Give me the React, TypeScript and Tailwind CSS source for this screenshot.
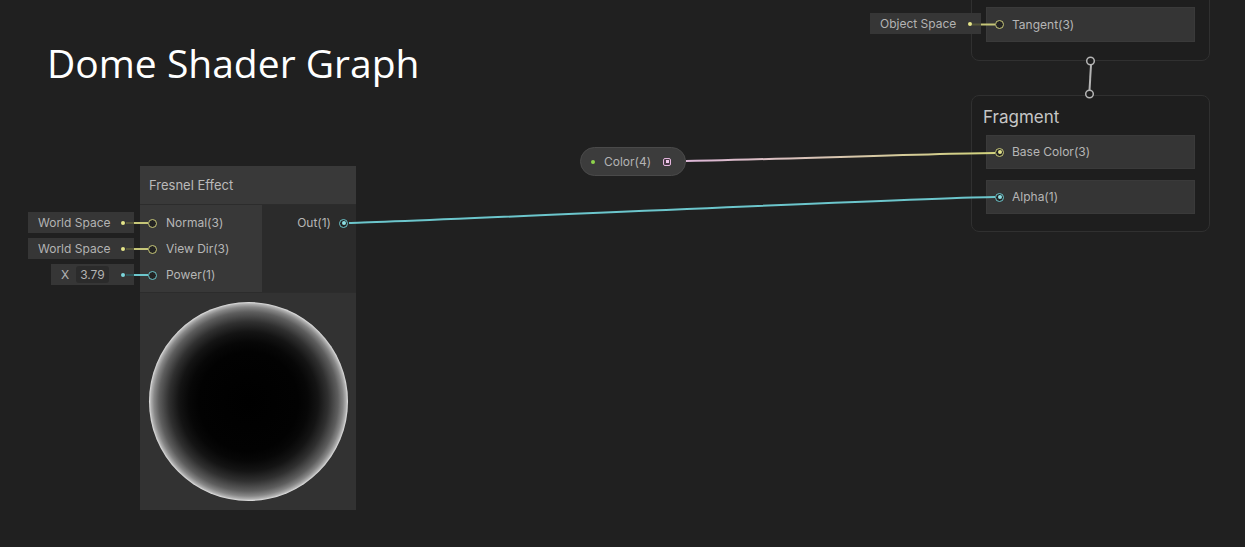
import type { ReactNode } from "react";

type PortColor = "yellow" | "cyan";

const ringColor: Record<PortColor, string> = {
    yellow: "border-[#c9c97a]",
    cyan: "border-[#6cc6cc]",
};

function Ring({ color, filled }: { color: PortColor; filled?: boolean }) {
    return (
        <span
            className={`flex h-[9px] w-[9px] shrink-0 items-center justify-center rounded-full border-[1.5px] bg-[#232323] ${ringColor[color]}`}
        >
            {filled && (
                <span
                    className={
                        color === "yellow"
                            ? "h-[4px] w-[4px] rounded-full bg-[#e2e28c]"
                            : "h-[4px] w-[4px] rounded-full bg-[#8de0e4]"
                    }
                />
            )}
        </span>
    );
}

function InputPill({ children, dot }: { children: ReactNode; dot: string }) {
    return (
        <div className="flex h-[21px] items-center justify-end gap-[7px] bg-[#363636] pl-[10px] pr-[9px] text-[12px] text-[#b3b3b3]">
            {children}
            <span className={`h-[4px] w-[4px] rounded-full ${dot}`} />
        </div>
    );
}

function MasterRow({ label, color, filled }: { label: string; color: PortColor; filled?: boolean }) {
    return (
        <div className="flex h-[34px] items-center gap-[8px] border border-[#3a3a3a] bg-[#353535] pl-[8px] text-[12px] text-[#b6b6b6]">
            <Ring color={color} filled={filled} />
            <span>{label}</span>
        </div>
    );
}

const sphere =
    "bg-[radial-gradient(circle_closest-side,#000_0%,#020202_50%,#070707_60%,#141414_70%,#303030_80%,#5e5e5e_90%,#878787_95%,#b0b0b0_98%,#e4e4e4_100%)]";

export default function App() {
    return (
        <div className="relative h-[547px] w-[1245px] overflow-hidden bg-[#202020] font-['Inter',sans-serif]">
            <h1 className="absolute left-[47px] top-[37px] font-['Open_Sans',sans-serif] text-[39px] leading-[52px] text-white">
                Dome Shader Graph
            </h1>

            {/* Vertex node (cut off at top) */}
            <div className="absolute left-[971px] top-[-40px] flex w-[239px] flex-col rounded-[8px] border border-[#303030] bg-[#1e1e1e] px-[14px] pb-[18px] pt-[46px]">
                <div className="flex h-[35px] items-center gap-[8px] border border-[#3a3a3a] bg-[#353535] pl-[8px] text-[12px] text-[#b6b6b6]">
                    <Ring color="yellow" />
                    <span>Tangent(3)</span>
                </div>
            </div>
            <div className="absolute left-[870px] top-[13px]">
                <div className="w-[111px]">
                    <InputPill dot="bg-[#e6e68a]">
                        <span className="mr-auto">Object Space</span>
                    </InputPill>
                </div>
            </div>

            {/* Fragment node */}
            <div className="absolute left-[971px] top-[95px] flex w-[239px] flex-col rounded-[8px] border border-[#303030] bg-[#1e1e1e] pb-[17px]">
                <div className="flex h-[39px] items-center pl-[11px] pt-[4px] text-[17px] text-[#c6c6c6]">Fragment</div>
                <div className="flex flex-col gap-[11px] px-[14px]">
                    <MasterRow label="Base Color(3)" color="yellow" filled />
                    <MasterRow label="Alpha(1)" color="cyan" filled />
                </div>
            </div>

            {/* Color property */}
            <div className="absolute left-[580px] top-[147px] flex h-[29px] w-[106px] items-center rounded-full border border-[#4a4a4a] bg-[#3c3c3c] pl-[10px] text-[12px] text-[#b3b3b3]">
                <span className="h-[4px] w-[4px] rounded-full bg-[#8fd44c]" />
                <span className="ml-[9px]">Color(4)</span>
                <span className="ml-[12px] flex h-[8px] w-[8px] items-center justify-center rounded-[2px] border border-[#e3b6dd] bg-[#4a3a48]">
                    <span className="h-[3px] w-[3px] bg-[#f0c8ea]" />
                </span>
            </div>

            {/* Fresnel inputs */}
            <div className="absolute left-[28px] top-[212px] flex w-[106px] flex-col items-end gap-[5px]">
                <div className="w-[106px]">
                    <InputPill dot="bg-[#e6e68a]">
                        <span className="mr-auto">World Space</span>
                    </InputPill>
                </div>
                <div className="w-[106px]">
                    <InputPill dot="bg-[#e6e68a]">
                        <span className="mr-auto">World Space</span>
                    </InputPill>
                </div>
                <div className="w-[83px]">
                    <InputPill dot="bg-[#7cd6dc]">
                        <span>X</span>
                        <span className="mr-auto flex h-[17px] items-center rounded-[3px] bg-[#2b2b2b] px-[4px]">3.79</span>
                    </InputPill>
                </div>
            </div>

            {/* Fresnel Effect node */}
            <div className="absolute left-[140px] top-[166px] flex w-[216px] flex-col">
                <div className="flex h-[38px] items-center bg-[#393939] pl-[9px] pt-[1px] text-[13px] text-[#bababa]">
                    Fresnel Effect
                </div>
                <div className="flex h-[88px] border-t border-[#2c2c2c]">
                    <div className="flex w-[122px] flex-col bg-[#383838] pl-[8px] pt-[5px] text-[12px] text-[#b6b6b6]">
                        {[
                            { label: "Normal(3)", color: "yellow" as const },
                            { label: "View Dir(3)", color: "yellow" as const },
                            { label: "Power(1)", color: "cyan" as const },
                        ].map((p) => (
                            <div key={p.label} className="flex h-[26px] items-center gap-[9px]">
                                <Ring color={p.color} />
                                <span>{p.label}</span>
                            </div>
                        ))}
                    </div>
                    <div className="flex flex-1 justify-end bg-[#2b2b2b] pr-[8px] pt-[5px] text-[12px] text-[#b6b6b6]">
                        <div className="flex h-[26px] items-center gap-[8px]">
                            <span>Out(1)</span>
                            <Ring color="cyan" filled />
                        </div>
                    </div>
                </div>
                <div className="flex h-[218px] items-center justify-center border-t border-[#2c2c2c] bg-[#323232]">
                    <div className={`h-[199px] w-[199px] rounded-full ${sphere}`} />
                </div>
            </div>

            {/* Wires */}
            <svg className="pointer-events-none absolute inset-0" width="1245" height="547">
                <defs>
                    <linearGradient id="colorWire" gradientUnits="userSpaceOnUse" x1="690" y1="0" x2="985" y2="0">
                        <stop offset="0" stopColor="#dcb6d6" />
                        <stop offset="0.45" stopColor="#d8c4b4" />
                        <stop offset="1" stopColor="#d2d27e" />
                    </linearGradient>
                </defs>
                <path d="M686 161 C 720 161, 950 153, 995 153" stroke="url(#colorWire)" strokeWidth="2" fill="none" />
                <path d="M349 223 C 380 223, 940 197, 995 197" stroke="#6cc6cc" strokeWidth="2" fill="none" />

                <line x1="126" y1="223" x2="134" y2="223" stroke="#56563a" strokeWidth="2" />
                <line x1="134" y1="223" x2="148" y2="223" stroke="#c6c678" strokeWidth="2" />
                <line x1="126" y1="249" x2="134" y2="249" stroke="#56563a" strokeWidth="2" />
                <line x1="134" y1="249" x2="148" y2="249" stroke="#c6c678" strokeWidth="2" />
                <line x1="126" y1="275" x2="134" y2="275" stroke="#2e5558" strokeWidth="2" />
                <line x1="134" y1="275" x2="148" y2="275" stroke="#6cc6cc" strokeWidth="2" />

                <line x1="972" y1="24.5" x2="981" y2="24.5" stroke="#56563a" strokeWidth="2" />
                <line x1="981" y1="24.5" x2="995" y2="24.5" stroke="#c6c678" strokeWidth="2" />

                <line x1="1091" y1="65" x2="1089.5" y2="90" stroke="#b4b4b4" strokeWidth="2" />
                <circle cx="1090.5" cy="61" r="3.8" fill="#1e1e1e" stroke="#b4b4b4" strokeWidth="1.5" />
                <circle cx="1089.5" cy="94" r="3.8" fill="#1e1e1e" stroke="#b4b4b4" strokeWidth="1.5" />
            </svg>
        </div>
    );
}
